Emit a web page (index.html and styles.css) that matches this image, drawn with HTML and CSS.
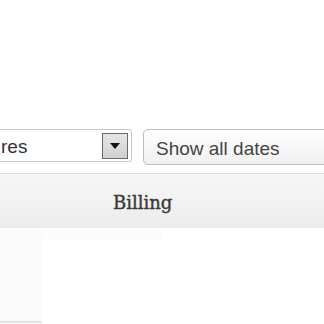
FILE: index.html
```html
<!DOCTYPE html>
<html lang="en">
<head>
    <meta charset="UTF-8">
    <meta name="viewport" content="width=device-width, initial-scale=1.0">
    <title>Billing</title>
    <link rel="stylesheet" href="styles.css">
</head>
<body>

<div class="page">

    <!-- Filtri -->
    <div class="filters">
        <div class="select select-type">
            <span class="select-text">res</span>
            <span class="select-btn">
                <svg width="10" height="6" viewBox="0 0 10 6"><path d="M0 0 L10 0 L5 6 Z" fill="#111"/></svg>
            </span>
        </div>
        <div class="select select-dates">
            <span class="select-text">Show all dates</span>
        </div>
    </div>

    <!-- Intestazione tabella -->
    <div class="table-head">
        <span class="col-title">Billing</span>
    </div>

    <!-- Corpo tabella -->
    <div class="table-body">
        <div class="side-col"></div>
        <div class="main-col">
            <div class="main-row"></div>
        </div>
    </div>

</div>

</body>
</html>
```

FILE: styles.css
```css
/* Base */
body {
    margin: 0;
    padding: 0;
    background-color: #fff;
    font-family: "Liberation Sans", Arial, sans-serif;
    overflow: hidden;
}

.page {
    width: 324px;
    height: 324px;
    overflow: hidden;
    padding-top: 129px;
    box-sizing: border-box;
}

/* Filtri */
.filters {
    display: flex;
    align-items: flex-start;
    gap: 11px;
    margin-left: -12px;
}

.select {
    flex-shrink: 0;
    box-sizing: border-box;
    display: flex;
    align-items: center;
    border: 1px solid #c8c8c8;
    color: #333;
    font-size: 19px;
}

.select-text {
    padding-top: 3px;
}

.select-type {
    width: 144px;
    height: 33px;
    padding-left: 12px;
    padding-right: 3px;
    background-color: #fff;
    border-radius: 0 3px 3px 0;
    justify-content: space-between;
}

.select-btn {
    width: 24px;
    height: 24px;
    border: 1px solid #6a6a6a;
    background: linear-gradient(#e6e6e6, #d0d0d0);
    display: flex;
    align-items: center;
    justify-content: center;
    margin-top: 1px;
}

.select-dates {
    width: 220px;
    height: 36px;
    padding-left: 12px;
    border-color: #bdbdbd;
    border-radius: 5px;
    background: linear-gradient(#fff, #f0f0f0);
    color: #444;
}

/* Intestazione */
.table-head {
    margin-top: 8px;
    height: 55px;
    box-sizing: border-box;
    border-top: 1px solid #dadada;
    background: linear-gradient(#f7f7f7, #ececec);
    display: flex;
    align-items: center;
}

.col-title {
    margin-left: 113px;
    font-family: "DejaVu Serif", Georgia, serif;
    font-size: 18px;
    color: #3a3a3a;
    -webkit-text-stroke: 0.4px #3a3a3a;
    padding-top: 3px;
}

/* Corpo */
.table-body {
    display: flex;
    margin-top: 1px;
}

.side-col {
    width: 42px;
    height: 92px;
    background-color: #fafafa;
    border-bottom: 2px solid #e2e2e2;
}

.main-col {
    flex: 1;
}

.main-row {
    width: 120px;
    height: 10px;
    background-color: #fcfcfc;
}
```
